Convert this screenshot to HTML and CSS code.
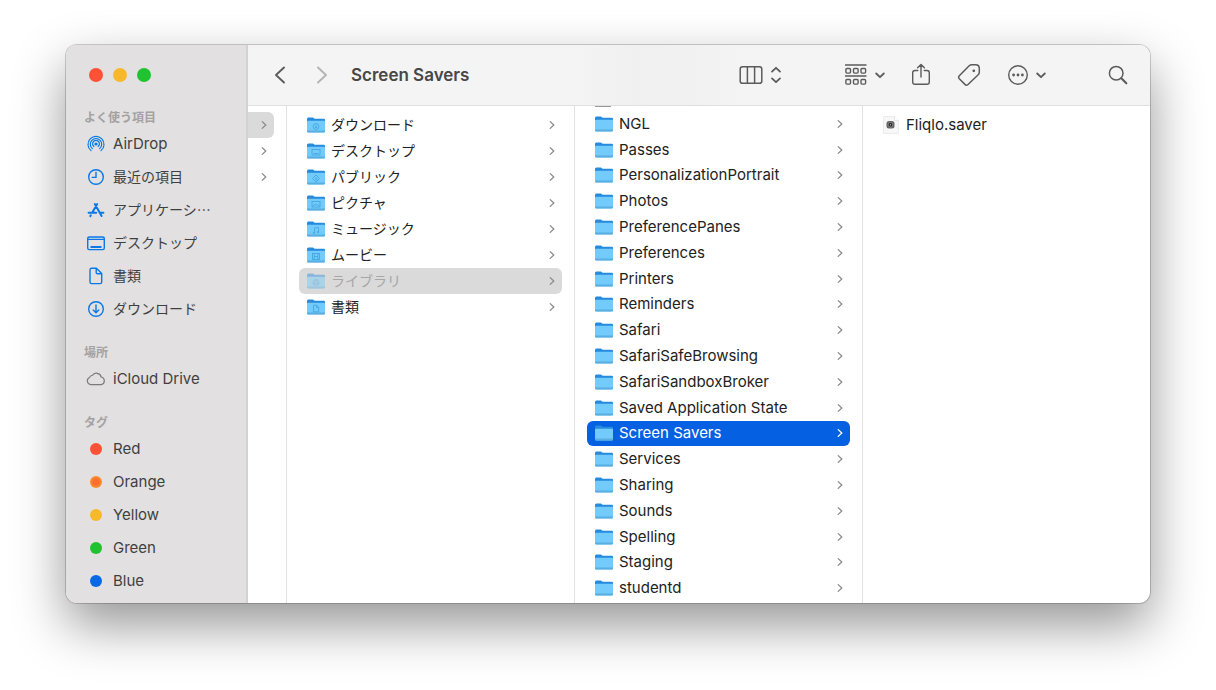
FILE: index.html
```html
<!DOCTYPE html>
<html lang="ja">
<head>
<meta charset="utf-8">
<title>Screen Savers</title>
<link rel="stylesheet" href="styles.css">
</head>
<body>
<svg class="sprites" aria-hidden="true">
  <symbol id="folder" viewBox="0 0 18 16">
    <path d="M0 2Q0 .5 1.4 .5H5.6Q6.4 .5 7 1.2L7.6 1.8H16.8Q18 1.8 18 3V8H0Z" fill="#268ade"/>
    <path d="M0 4.6Q0 3.8 .8 3.8H17.2Q18 3.8 18 4.6V14.2Q18 15.6 16.6 15.6H1.4Q0 15.6 0 14.2Z" fill="#72cbfa"/>
    <path d="M0 13.4H18V14.2Q18 15.6 16.6 15.6H1.4Q0 15.6 0 14.2Z" fill="#5aaee0"/>
  </symbol>
  <symbol id="chev" viewBox="0 0 6 10"><path d="M1.2 1.6 4.8 5 1.2 8.4" fill="none" stroke="currentColor" stroke-width="1.3" stroke-linecap="round" stroke-linejoin="round"/></symbol>
  <symbol id="down" viewBox="0 0 10 7"><path d="M1.2 1.5 5 5.2 8.800 1.5" fill="none" stroke="currentColor" stroke-width="1.8" stroke-linecap="round" stroke-linejoin="round"/></symbol>
</svg>

<div class="window">
  <aside class="sidebar">
    <div class="lights">
      <button class="light red" aria-label="閉じる"></button>
      <button class="light yellow" aria-label="しまう"></button>
      <button class="light green" aria-label="拡大"></button>
    </div>
    <nav class="group">
      <h2 class="heading">よく使う項目</h2>
      <a class="place" href="#airdrop">
        <svg class="glyph" viewBox="0 0 20 20"><circle cx="10" cy="10" r="1.600" fill="currentColor"/><g fill="none" stroke="currentColor" stroke-width="1.2" stroke-linecap="round"><path d="M5 16.600a8 8 0 1 1 10 0"/><path d="M6.400 14.600a5.700 5.700 0 1 1 7.200 0"/><path d="M7.900 12.500a3.400 3.400 0 1 1 4.200 0"/></g></svg>
        <span>AirDrop</span></a>
      <a class="place jp" href="#recents">
        <svg class="glyph" viewBox="0 0 20 20" fill="none" stroke="currentColor" stroke-width="1.400" stroke-linecap="round"><circle cx="10" cy="10" r="7.300"/><path d="M10 5.200V10.400H6.200"/></svg>
        <span>最近の項目</span></a>
      <a class="place jp" href="#applications">
        <svg class="glyph" viewBox="0 0 20 20" fill="none" stroke="currentColor" stroke-width="2" stroke-linecap="round"><path d="M11.200 4 6.300 12.500M8.800 4 15.600 16M2.600 12.800H10.200M14.200 12.800H17.400M4.800 15.300 4.300 16.100"/></svg>
        <span>アプリケーシ…</span></a>
      <a class="place jp" href="#desktop">
        <svg class="glyph" viewBox="0 0 20 20" fill="none" stroke="currentColor" stroke-width="1.400"><rect x="1.700" y="4" width="16.600" height="12.600" rx="1.600"/><path d="M2 6.400H18" /><path d="M4.500 14H15.500" stroke-width="2"/></svg>
        <span>デスクトップ</span></a>
      <a class="place jp" href="#documents">
        <svg class="glyph" viewBox="0 0 20 20" fill="none" stroke="currentColor" stroke-width="1.400" stroke-linejoin="round"><path d="M5.600 2.300H10.400L15.700 7.600V16Q15.700 17.600 14.100 17.600H5.600Q4 17.600 4 16V3.900Q4 2.300 5.600 2.300ZM10.200 2.500V6.500Q10.200 7.800 11.500 7.800H15.500"/></svg>
        <span>書類</span></a>
      <a class="place jp" href="#downloads">
        <svg class="glyph" viewBox="0 0 20 20" fill="none" stroke="currentColor" stroke-width="1.400" stroke-linecap="round" stroke-linejoin="round"><circle cx="10" cy="10" r="7.300"/><path d="M10 6V13.500M7.200 11 10 13.700 12.800 11"/></svg>
        <span>ダウンロード</span></a>
    </nav>
    <nav class="group">
      <h2 class="heading">場所</h2>
      <a class="place" href="#icloud">
        <svg class="glyph gray" viewBox="0 0 20 20" fill="none" stroke="currentColor" stroke-width="1.200" stroke-linejoin="round"><path d="M4.800 15.600A3.700 3.700 0 0 1 3.600 8.500Q4 6.300 6.300 6.500A4.900 4.900 0 0 1 15.200 8 3.900 3.900 0 0 1 15.400 15.600Z"/></svg>
        <span>iCloud Drive</span></a>
    </nav>
    <nav class="group">
      <h2 class="heading">タグ</h2>
      <a class="place" href="#red"><i class="tag red"></i><span>Red</span></a>
      <a class="place" href="#orange"><i class="tag orange"></i><span>Orange</span></a>
      <a class="place" href="#yellow"><i class="tag yellow"></i><span>Yellow</span></a>
      <a class="place" href="#green"><i class="tag green"></i><span>Green</span></a>
      <a class="place" href="#blue"><i class="tag blue"></i><span>Blue</span></a>
    </nav>
  </aside>

  <main class="main">
    <header class="toolbar">
      <button class="tool" aria-label="戻る"><svg width="12" height="20" viewBox="0 0 12 20" fill="none" stroke="currentColor" stroke-width="1.900" stroke-linecap="round" stroke-linejoin="round"><path d="M10 2.500 2 10 10 17.500"/></svg></button>
      <button class="tool forward" aria-label="進む"><svg width="12" height="20" viewBox="0 0 12 20" fill="none" stroke="currentColor" stroke-width="1.900" stroke-linecap="round" stroke-linejoin="round"><path d="M2 2.500 10 10 2 17.500"/></svg></button>
      <h1 class="title">Screen Savers</h1>
      <div class="tools">
        <button class="tool view" aria-label="表示">
          <svg width="24" height="20" viewBox="0 0 24 20" fill="none" stroke="currentColor" stroke-width="1.500"><rect x="1.200" y="1.700" width="21.600" height="16.600" rx="2.400"/><path d="M8.400 2V18M15.600 2V18"/></svg>
          <svg width="12" height="20" viewBox="0 0 12 20" fill="none" stroke="currentColor" stroke-width="1.800" stroke-linecap="round" stroke-linejoin="round"><path d="M2 6.600 6 2.800 10 6.600M2 13.400 6 17.200 10 13.400"/></svg>
        </button>
        <div class="actions">
          <button class="tool" aria-label="グループ">
            <svg width="24" height="22" viewBox="0 0 24 22" fill="none" stroke="currentColor" stroke-width="1.400"><path d="M1 1H22.500M1 12H22.500"/><rect x="1.900" y="4.500" width="4.600" height="4.600" rx="1"/><rect x="9.500" y="4.500" width="4.600" height="4.600" rx="1"/><rect x="17" y="4.500" width="4.600" height="4.600" rx="1"/><rect x="1.900" y="15.500" width="4.600" height="4.600" rx="1"/><rect x="9.500" y="15.500" width="4.600" height="4.600" rx="1"/><rect x="17" y="15.500" width="4.600" height="4.600" rx="1"/></svg>
            <svg width="10" height="7"><use href="#down"/></svg>
          </button>
          <button class="tool" aria-label="共有"><svg width="20" height="24" viewBox="0 0 20 24" fill="none" stroke="currentColor" stroke-width="1.400" stroke-linecap="round" stroke-linejoin="round"><path d="M6.800 7.500H4Q1.700 7.500 1.700 9.800V18.900Q1.700 21.200 4 21.200H16Q18.300 21.200 18.300 18.900V9.800Q18.300 7.500 16 7.500H13.200M10 14V1.600M6.600 4.800 10 1.400 13.400 4.800"/></svg></button>
          <button class="tool" aria-label="タグ"><svg width="24" height="24" viewBox="0 0 24 24" fill="none" stroke="currentColor" stroke-width="1.500" stroke-linejoin="round"><path d="M12.200 2.700Q13.300 1.700 14.800 1.700H18.600Q22.300 1.700 22.300 5.400V9.200Q22.300 10.700 21.200 11.700L11 21.500Q9.400 22.900 7.900 21.400L2.300 15.800Q.9 14.200 2.300 12.700Z"/><circle cx="16.800" cy="7.800" r="1.400" fill="currentColor" stroke="none"/></svg></button>
          <button class="tool more" aria-label="その他">
            <svg width="22" height="22" viewBox="0 0 22 22"><circle cx="11" cy="11" r="9.300" fill="none" stroke="currentColor" stroke-width="1.400"/><g fill="currentColor"><circle cx="6.600" cy="11" r="1.400"/><circle cx="11" cy="11" r="1.400"/><circle cx="15.400" cy="11" r="1.400"/></g></svg>
            <svg width="10" height="7"><use href="#down"/></svg>
          </button>
        </div>
        <button class="tool" aria-label="検索"><svg width="20" height="20" viewBox="0 0 20 20" fill="none" stroke="currentColor" stroke-linecap="round"><circle cx="8.200" cy="8.200" r="6.800" stroke-width="1.500"/><path d="M13.300 13.300 18.300 18.300" stroke-width="2.100"/></svg></button>
      </div>
    </header>

    <div class="columns">
      <section class="column stub">
        <a class="row open" href="#c1"><svg class="chev"><use href="#chev"/></svg></a>
        <a class="row" href="#c2"><svg class="chev"><use href="#chev"/></svg></a>
        <a class="row" href="#c3"><svg class="chev"><use href="#chev"/></svg></a>
      </section>

      <section class="column home jp">
        <a class="row" href="#h1"><svg class="folder" viewBox="0 0 18 16"><use href="#folder"/><g class="mark"><circle cx="9" cy="9.500" r="2.900"/><path d="M9 8V11M7.800 10 9 11 10.200 10"/></g></svg><span>ダウンロード</span><svg class="chev"><use href="#chev"/></svg></a>
        <a class="row" href="#h2"><svg class="folder" viewBox="0 0 18 16"><use href="#folder"/><g class="mark"><rect x="5" y="6.500" width="8" height="5.500"/><path d="M6.500 10.500H11.500"/></g></svg><span>デスクトップ</span><svg class="chev"><use href="#chev"/></svg></a>
        <a class="row" href="#h3"><svg class="folder" viewBox="0 0 18 16"><use href="#folder"/><g class="mark"><path d="M9 6 12.500 9.500 9 13 5.500 9.500ZM9 8V11L10.500 10"/></g></svg><span>パブリック</span><svg class="chev"><use href="#chev"/></svg></a>
        <a class="row" href="#h4"><svg class="folder" viewBox="0 0 18 16"><use href="#folder"/><g class="mark"><rect x="5" y="6.500" width="8" height="5.500"/><path d="M5.500 11.500 8 9 10 10.500 11 9.500 12.500 11.500"/></g></svg><span>ピクチャ</span><svg class="chev"><use href="#chev"/></svg></a>
        <a class="row" href="#h5"><svg class="folder" viewBox="0 0 18 16"><use href="#folder"/><g class="mark"><path d="M7.500 12V7L11.500 6.300V11.300"/><circle cx="6.800" cy="12" r=".7"/><circle cx="10.800" cy="11.300" r=".7"/></g></svg><span>ミュージック</span><svg class="chev"><use href="#chev"/></svg></a>
        <a class="row" href="#h6"><svg class="folder" viewBox="0 0 18 16"><use href="#folder"/><g class="mark"><rect x="5.500" y="6.500" width="7" height="6"/><path d="M7.200 6.500V12.500M10.800 6.500V12.500M7.200 9.500H10.800"/></g></svg><span>ムービー</span><svg class="chev"><use href="#chev"/></svg></a>
        <a class="row open dim" href="#h7"><svg class="folder" viewBox="0 0 18 16"><use href="#folder"/><g class="mark"><circle cx="9" cy="9.500" r="3"/><path d="M6 12 9 6.500 12 12M6.500 10.500H11.500"/></g></svg><span>ライブラリ</span><svg class="chev"><use href="#chev"/></svg></a>
        <a class="row" href="#h8"><svg class="folder" viewBox="0 0 18 16"><use href="#folder"/><g class="mark"><path d="M6.500 6.200H9.500L11.700 8.400V12.800H6.500ZM9.500 6.200V8.400H11.700"/></g></svg><span>書類</span><svg class="chev"><use href="#chev"/></svg></a>
      </section>

      <section class="column library">
        <a class="row" href="#l1"><svg class="folder"><use href="#folder"/></svg><span>NGL</span><svg class="chev"><use href="#chev"/></svg></a>
        <a class="row" href="#l2"><svg class="folder"><use href="#folder"/></svg><span>Passes</span><svg class="chev"><use href="#chev"/></svg></a>
        <a class="row" href="#l3"><svg class="folder"><use href="#folder"/></svg><span>PersonalizationPortrait</span><svg class="chev"><use href="#chev"/></svg></a>
        <a class="row" href="#l4"><svg class="folder"><use href="#folder"/></svg><span>Photos</span><svg class="chev"><use href="#chev"/></svg></a>
        <a class="row" href="#l5"><svg class="folder"><use href="#folder"/></svg><span>PreferencePanes</span><svg class="chev"><use href="#chev"/></svg></a>
        <a class="row" href="#l6"><svg class="folder"><use href="#folder"/></svg><span>Preferences</span><svg class="chev"><use href="#chev"/></svg></a>
        <a class="row" href="#l7"><svg class="folder"><use href="#folder"/></svg><span>Printers</span><svg class="chev"><use href="#chev"/></svg></a>
        <a class="row" href="#l8"><svg class="folder"><use href="#folder"/></svg><span>Reminders</span><svg class="chev"><use href="#chev"/></svg></a>
        <a class="row" href="#l9"><svg class="folder"><use href="#folder"/></svg><span>Safari</span><svg class="chev"><use href="#chev"/></svg></a>
        <a class="row" href="#l10"><svg class="folder"><use href="#folder"/></svg><span>SafariSafeBrowsing</span><svg class="chev"><use href="#chev"/></svg></a>
        <a class="row" href="#l11"><svg class="folder"><use href="#folder"/></svg><span>SafariSandboxBroker</span><svg class="chev"><use href="#chev"/></svg></a>
        <a class="row" href="#l12"><svg class="folder"><use href="#folder"/></svg><span>Saved Application State</span><svg class="chev"><use href="#chev"/></svg></a>
        <a class="row selected" href="#l13" aria-current="true"><svg class="folder"><use href="#folder"/></svg><span>Screen Savers</span><svg class="chev"><use href="#chev"/></svg></a>
        <a class="row" href="#l14"><svg class="folder"><use href="#folder"/></svg><span>Services</span><svg class="chev"><use href="#chev"/></svg></a>
        <a class="row" href="#l15"><svg class="folder"><use href="#folder"/></svg><span>Sharing</span><svg class="chev"><use href="#chev"/></svg></a>
        <a class="row" href="#l16"><svg class="folder"><use href="#folder"/></svg><span>Sounds</span><svg class="chev"><use href="#chev"/></svg></a>
        <a class="row" href="#l17"><svg class="folder"><use href="#folder"/></svg><span>Spelling</span><svg class="chev"><use href="#chev"/></svg></a>
        <a class="row" href="#l18"><svg class="folder"><use href="#folder"/></svg><span>Staging</span><svg class="chev"><use href="#chev"/></svg></a>
        <a class="row" href="#l19"><svg class="folder"><use href="#folder"/></svg><span>studentd</span><svg class="chev"><use href="#chev"/></svg></a>
      </section>

      <section class="column files">
        <a class="row" href="#f1"><svg class="file" viewBox="0 0 16 18"><path d="M.5 .5H11.500L15.500 4.500V17.500H.5Z" fill="#f7f7f7" stroke="#ececec"/><path d="M11.500 .5V4.500H15.500" fill="#fff" stroke="#e6e6e6"/><rect x="3.500" y="5" width="8" height="7.500" rx="2.500" fill="#666"/><circle cx="7.500" cy="8.700" r="2.300" fill="#222" stroke="#999" stroke-width=".7"/><circle cx="7.500" cy="8.700" r=".7" fill="#bbb"/></svg><span>Fliqlo.saver</span></a>
      </section>
    </div>
  </main>
</div>
</body>
</html>
```

FILE: styles.css
```css
* {
  box-sizing: border-box;
}

body {
  margin: 0;
  min-height: 100vh;
  padding: 45px 66px 87px;
  display: flex;
  background: #fff;
  color: #222;
  font-family: Inter, "Noto Sans CJK JP", sans-serif;
  font-size: 15px;
  line-height: 20px;
}

a {
  color: inherit;
  text-decoration: none;
}

button {
  border: 0;
  padding: 0;
  background: none;
  color: inherit;
  font: inherit;
}

svg {
  flex: none;
}

.sprites {
  position: absolute;
  width: 0;
  height: 0;
}

.jp {
  font-family: "Noto Sans CJK JP", Inter, sans-serif;
  font-size: 14px;
}

.jp span {
  padding-bottom: 2px;
}

.window {
  flex: 1;
  min-width: 0;
  display: flex;
  border-radius: 11px;
  overflow: hidden;
  background: #fff;
  box-shadow: 0 0 0 1px rgba(0, 0, 0, 0.18), 0 22px 52px rgba(0, 0, 0, 0.42);
}

/* Sidebar */

.sidebar {
  flex: none;
  width: 182px;
  padding: 23px 18px 0;
  background: #e2e0e1;
  border-right: 2px solid #d3d2d3;
  color: #3f3f40;
}

.lights {
  display: flex;
  gap: 10px;
  padding: 0 5px;
  margin-bottom: 25px;
}

.light {
  width: 14px;
  height: 14px;
  border-radius: 50%;
}

.red {
  background: #ff5135;
}

.yellow {
  background: #f8b82c;
}

.green {
  background: #20c22f;
}

.orange {
  background: radial-gradient(circle, #ff6c30 30%, #f8982a 75%);
}

.blue {
  background: #0869e6;
}

.group {
  margin-bottom: 17px;
}

.group:last-child {
  margin-bottom: 0;
}

.heading {
  margin: 0;
  font-family: "Noto Sans CJK JP", sans-serif;
  font-size: 12px;
  font-weight: 700;
  line-height: 20px;
  color: #a3a2a3;
}

.place {
  display: flex;
  align-items: center;
  gap: 7px;
  height: 33px;
  padding-left: 2px;
  white-space: nowrap;
}

.glyph {
  width: 20px;
  height: 20px;
  color: #0a78e6;
}

.gray {
  color: #7c7b7c;
}

.tag {
  width: 12px;
  height: 12px;
  margin: 0 4px;
  border-radius: 50%;
}

/* Toolbar */

.main {
  flex: 1;
  min-width: 0;
  display: flex;
  flex-direction: column;
}

.toolbar {
  display: flex;
  align-items: center;
  height: 61px;
  padding: 0 22px 0 26px;
  background: linear-gradient(90deg, #f4f4f4 36%, #f0f0f0 43%, #f1f1f1 48%, #f4f4f4 56%);
  border-bottom: 1px solid #e0e0e0;
  color: #5b5b5b;
}

.tool {
  display: flex;
  align-items: center;
  gap: 7px;
}

.forward {
  margin-left: 30px;
  color: #b4b4b4;
}

.title {
  margin: 0 0 0 23px;
  font-size: 17px;
  font-weight: 600;
  line-height: 24px;
  color: #474747;
}

.tools {
  display: flex;
  align-items: center;
  gap: 62px;
  margin-left: auto;
}

.actions {
  display: flex;
  align-items: center;
  gap: 26px;
}

/* Columns */

.columns {
  flex: 1;
  display: flex;
}

.column {
  display: flex;
  flex-direction: column;
  flex: none;
  width: 288px;
  padding: 6px 12px 0;
  border-right: 1px solid #e2e2e2;
}

.row {
  display: flex;
  align-items: center;
  gap: 6px;
  height: 26px;
  padding: 0 7px 0 8px;
  border-radius: 6px;
  white-space: nowrap;
}

.folder {
  width: 18px;
  height: 16px;
}

.mark {
  fill: none;
  stroke: #3fa3df;
  stroke-width: 0.8;
}

.chev {
  width: 6px;
  height: 10px;
  margin-left: auto;
  color: #8b8b8b;
}

.open {
  background: #dadada;
}

.dim {
  color: #a6a6a6;
}

.dim .folder {
  opacity: 0.45;
}

.selected {
  background: #0561e2;
  color: #fff;
}

.selected .chev {
  color: #fff;
}

.stub {
  width: 39px;
  padding: 6px 12px 0 0;
}

.stub .open {
  border-radius: 0 6px 6px 0;
}

.library {
  position: relative;
  padding: 5px 12px 2px;
}

.library .row {
  flex: 1;
  height: auto;
}

/* Lower edge of the folder scrolled under the toolbar */
.library::before {
  content: "";
  position: absolute;
  top: 0;
  left: 20px;
  width: 16px;
  height: 1px;
  background: #999;
}

.files {
  flex: 1;
  border-right: 0;
  padding: 6px 12px 0;
}

.files .row {
  gap: 7px;
}

.file {
  width: 16px;
  height: 18px;
}
```
